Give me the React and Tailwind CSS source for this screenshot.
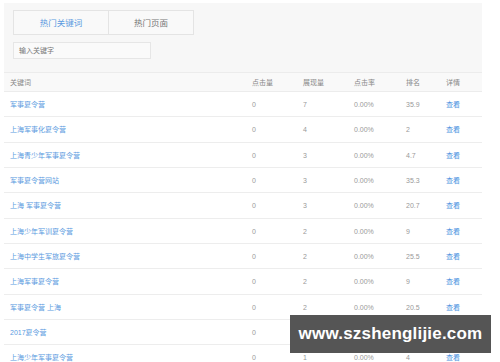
import React from "react";

const rows = [
  ["军事夏令营", "0", "7", "0.00%", "35.9"],
  ["上海军事化夏令营", "0", "4", "0.00%", "2"],
  ["上海青少年军事夏令营", "0", "3", "0.00%", "4.7"],
  ["军事夏令营网站", "0", "3", "0.00%", "35.3"],
  ["上海 军事夏令营", "0", "3", "0.00%", "20.7"],
  ["上海少年军训夏令营", "0", "2", "0.00%", "9"],
  ["上海中学生军旅夏令营", "0", "2", "0.00%", "25.5"],
  ["上海军事夏令营", "0", "2", "0.00%", "9"],
  ["军事夏令营 上海", "0", "2", "0.00%", "20.5"],
  ["2017夏令营", "0", "2", "0.00%", "7"],
  ["上海少年军事夏令营", "0", "1", "0.00%", "4"],
];

const font = { fontFamily: '"Liberation Sans", "Noto Sans CJK SC", sans-serif' };

export default function App() {
  return (
    <div className="relative w-[500px] h-[362px] bg-white overflow-hidden" style={font}>
      <div className="ml-[4px] pt-[3px] w-[478px]">
        <div className="bg-[#f7f7f7] pt-[7px] pb-[13px] pl-[9px] flex flex-col gap-[7px]">
          <div className="flex h-[25px] w-[181px] border border-[#e4e4e4]">
            <div className="w-[95px] flex items-center justify-center pt-[2px] text-[8.5px] text-[#5a9ae0] bg-[#f9f9f9] border-r border-[#e4e4e4]">
              热门关键词
            </div>
            <div className="flex-1 flex items-center justify-center pt-[2px] text-[8.5px] text-[#777] bg-[#f9f9f9]">
              热门页面
            </div>
          </div>
          <div className="h-[17px] w-[138px] border border-[#e6e6e6] bg-[#fafafa] flex items-center pl-[5px] pt-[2px] text-[7px] text-[#777]">
            输入关键字
          </div>
        </div>
        <div className="grid grid-cols-[248px_51px_51px_52px_40px_36px] h-[20px] items-center pt-[2px] bg-[#f9f9f9] border-t border-b border-[#ececec] text-[7px] text-[#888]">
          <div className="pl-[6px]">关键词</div>
          <div>点击量</div>
          <div>展现量</div>
          <div>点击率</div>
          <div>排名</div>
          <div>详情</div>
        </div>
        {rows.map((r, i) => (
          <div
            key={i}
            className="grid grid-cols-[248px_51px_51px_52px_40px_36px] h-[25.33px] items-center pt-[2px] border-b border-[#ededed] text-[7px] text-[#999]"
          >
            <div className="pl-[6px] text-[#5a9ae0]">{r[0]}</div>
            <div>{r[1]}</div>
            <div>{r[2]}</div>
            <div>{r[3]}</div>
            <div>{r[4]}</div>
            <div className="text-[#4a92e0]">查看</div>
          </div>
        ))}
      </div>
      <div className="absolute left-[290px] top-[315px] w-[201px] h-[38px] bg-[#555555] flex items-center justify-center">
        <span className="text-white font-bold text-[17px] tracking-[0.2px]" style={{ fontFamily: '"Liberation Sans", sans-serif' }}>
          www.szshenglijie.com
        </span>
      </div>
    </div>
  );
}
